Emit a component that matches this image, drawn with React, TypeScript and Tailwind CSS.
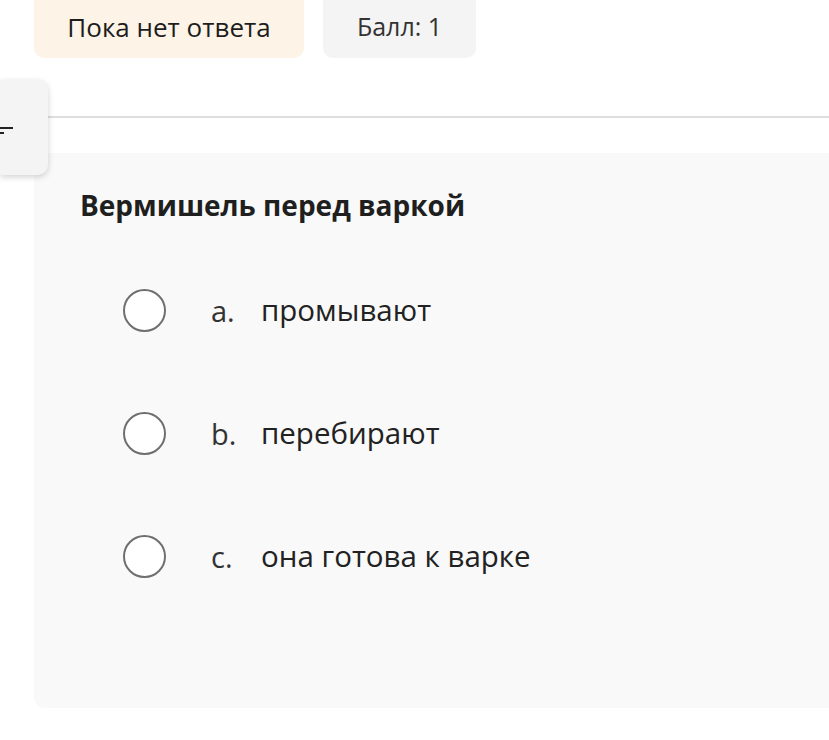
import React from "react";

const options = [
  { letter: "a.", text: "промывают" },
  { letter: "b.", text: "перебирают" },
  { letter: "c.", text: "она готова к варке" },
];

export default function App() {
  return (
    <div
      className="relative h-[740px] w-[829px] overflow-hidden bg-white text-[#1d1d1d]"
      style={{ fontFamily: '"Open Sans", "Liberation Sans", sans-serif' }}
    >
      {/* status pills */}
      <div className="flex gap-[19px] pl-[34px]">
        <div className="flex h-[58px] w-[270px] items-center justify-center rounded-b-[10px] bg-[#fdf4e7] pb-[4px] text-[26px]">
          Пока нет ответа
        </div>
        <div className="flex h-[58px] w-[153px] items-center justify-center rounded-b-[10px] bg-[#f4f4f4] pb-[4px] text-[25px] text-[#333]">
          Балл: 1
        </div>
      </div>

      {/* side tab + divider */}
      <div className="mt-[22px] flex">
        <div className="relative z-10 flex h-[95px] w-[48px] shrink-0 items-center rounded-r-[10px] bg-[#f4f4f4] shadow-[0_2px_6px_rgba(0,0,0,0.18)]">
          <svg width="14" height="14" viewBox="0 0 14 14" className="mt-[4px]">
            <path d="M0 5h13" stroke="#222" strokeWidth="2" />
            <path d="M0 10h4" stroke="#222" strokeWidth="2" />
          </svg>
        </div>
        <div className="mt-[36px] h-[2px] flex-1 bg-[#dedede]" />
      </div>

      {/* question card */}
      <div className="-mt-[22px] ml-[34px] h-[555px] rounded-bl-[10px] bg-[#f8f9f8] pl-[46px] pt-[33px]">
        <h2 className="text-[28px] font-bold leading-[38px] text-[#1f1f1f]">
          Вермишель перед варкой
        </h2>
        <div className="mt-[65px] flex flex-col gap-[80px] pl-[43px]">
          {options.map((o) => (
            <label key={o.letter} className="flex h-[43px] items-center">
              <span className="h-[43px] w-[43px] shrink-0 rounded-full border-2 border-[#6f6f6f] bg-white" />
              <span className="ml-[45px] w-[50px] text-[29px] text-[#333]">{o.letter}</span>
              <span className="text-[29.5px] text-[#222]">{o.text}</span>
            </label>
          ))}
        </div>
      </div>
    </div>
  );
}
